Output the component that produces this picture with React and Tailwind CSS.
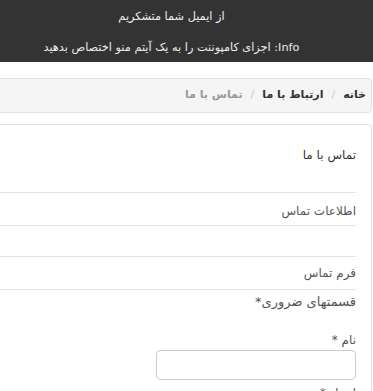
import React from 'react';

export default function App() {
  return (
    <div
      dir="rtl"
      className="w-[373px] h-[391px] overflow-hidden bg-white text-[12px] text-[#333]"
      style={{ fontFamily: '"DejaVu Sans", Tahoma, sans-serif' }}
    >
      {/* System message */}
      <div className="h-[62px] bg-[#333333] text-[#eeeeee] text-[11.3px] pr-[30px] text-center">
        <p className="pt-[9px] leading-[16px]">از ایمیل شما متشکریم</p>
        <p className="mt-[15px] leading-[16px]">
          <span dir="ltr">Info</span>: اجزای کامپوننت را به یک آیتم منو اختصاص بدهید
        </p>
      </div>

      {/* Breadcrumb */}
      <div className="mt-[16px] -ml-[20px] mr-[1px] h-[35px] rounded-[4px] border border-[#e3e3e3] bg-[#f5f5f5] flex items-center pr-[5px] text-[11px] font-bold">
        <span className="text-[#333]">خانه</span>
        <span className="px-[8px] text-[#ccc] font-normal">/</span>
        <span className="text-[#333]">ارتباط با ما</span>
        <span className="px-[8px] text-[#ccc] font-normal">/</span>
        <span className="text-[#999]">تماس با ما</span>
      </div>

      {/* Contact page */}
      <div className="mt-[11px] -ml-[20px] mr-[1px] h-[400px] rounded-[4px] border border-[#e3e3e3] pr-[15px]">
        <h2 className="pt-[21px] leading-[18px] text-[12px] text-[#333]">تماس با ما</h2>

        <div className="mt-[28px] border-t border-[#e5e5e5]">
          <p className="mt-[9px] leading-[18px] text-[#555]">اطلاعات تماس</p>
        </div>
        <div className="mt-[5px] h-[31px] border-t border-[#e5e5e5]" />
        <div className="border-t border-[#e5e5e5]">
          <p className="mt-[7px] leading-[18px] text-[#555]">فرم تماس</p>
        </div>
        <div className="mt-[7px] border-t border-[#e5e5e5]">
          <p className="mt-[2px] leading-[20px] text-[13px] text-[#555]">قسمتهای ضروری*</p>
        </div>

        <label className="block mt-[19px] leading-[18px] text-[#555]">نام *</label>
        <input
          type="text"
          className="mt-[1px] block w-[200px] h-[30px] rounded-[4px] border border-[#cccccc] bg-white"
        />
        <label className="block mt-[4px] leading-[18px] text-[#555]">ایمیل *</label>
      </div>
    </div>
  );
}
